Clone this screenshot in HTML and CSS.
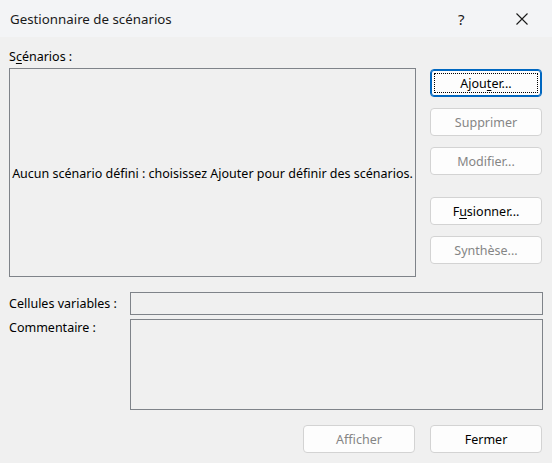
FILE: index.html
```html
<!DOCTYPE html>
<html lang="fr">
<head>
<meta charset="utf-8">
<link rel="stylesheet" href="styles.css">
</head>
<body>
<div class="dialog">
  <div class="titlebar">
    <span class="title">Gestionnaire de scénarios</span>
    <span class="help">?</span>
    <span class="close"><svg width="12" height="12" viewBox="0 0 12 12"><path d="M0.5 0.5 L11.5 11.5 M11.5 0.5 L0.5 11.5" stroke="#1a1a1a" stroke-width="1.1" fill="none"/></svg></span>
  </div>
  <div class="content">
    <div class="main">
      <div class="left">
        <div class="label">S<u>c</u>énarios :</div>
        <div class="listbox">Aucun scénario défini : choisissez Ajouter pour définir des scénarios.</div>
      </div>
      <div class="buttons">
        <button class="btn default"><span class="focus">Ajou<u>t</u>er...</span></button>
        <button class="btn disabled">Supprimer</button>
        <button class="btn disabled">Modifier...</button>
        <button class="btn spaced">F<u>u</u>sionner...</button>
        <button class="btn disabled">Synthèse...</button>
      </div>
    </div>
    <div class="fields">
      <div class="field-label">Cellules variables :</div>
      <div class="input"></div>
      <div class="field-label comment">Commentaire :</div>
      <div class="textarea"></div>
    </div>
    <div class="footer">
      <button class="btn disabled">Afficher</button>
      <button class="btn">Fermer</button>
    </div>
  </div>
</div>
</body>
</html>
```

FILE: styles.css
```css
html, body {
  margin: 0;
  padding: 0;
}
body {
  width: 552px;
  height: 463px;
  background: #f0f0f0;
  font-family: "Noto Sans", "Open Sans", sans-serif;
  font-size: 12.5px;
  color: #000;
  overflow: hidden;
}
.dialog {
  display: flex;
  flex-direction: column;
  height: 463px;
}
.titlebar {
  height: 37px;
  background: #f3f4f6;
  display: flex;
  align-items: center;
  padding-left: 10px;
}
.title {
  font-size: 13.3px;
  flex: 1;
  color: #1a1a1a;
}
.help {
  font-size: 15px;
  width: 12px;
  margin-right: 46px;
  color: #1a1a1a;
}
.close {
  display: flex;
  margin-right: 24px;
  margin-top: 1px;
}
.content {
  padding: 10px 10px 0 9px;
  display: flex;
  flex-direction: column;
}
.main {
  display: flex;
  gap: 14px;
}
.left {
  display: flex;
  flex-direction: column;
}
.label {
  height: 16px;
  line-height: 16px;
  margin-bottom: 3px;
  margin-top: 2px;
}
u {
  text-decoration-thickness: 1px;
  text-underline-offset: 2px;
}
.listbox {
  width: 405px;
  height: 206px;
  border: 1px solid #7f8389;
  display: flex;
  align-items: center;
  justify-content: center;
  white-space: nowrap;
  padding-top: 1px;
  box-sizing: content-box;
}
.buttons {
  display: flex;
  flex-direction: column;
  padding-top: 22px;
  gap: 11px;
}
.btn {
  width: 112px;
  height: 28px;
  box-sizing: border-box;
  background: #fdfdfd;
  border: 1px solid #d3d3d3;
  border-radius: 4px;
  font-family: inherit;
  font-size: 12.5px;
  color: #000;
  padding: 0;
  display: flex;
  align-items: center;
  justify-content: center;
}
.btn.disabled {
  color: #858585;
}
.btn.default {
  border: 1px solid #0067c0;
  box-shadow: inset 0 0 0 1px #0067c0;
  padding: 3px;
}
.focus {
  flex: 1;
  align-self: stretch;
  border: 1px dotted #000;
  display: flex;
  align-items: center;
  justify-content: center;
}
.btn.spaced {
  margin-top: 11px;
}
.fields {
  display: grid;
  grid-template-columns: 121px 413px;
  grid-template-rows: 23px 91px;
  row-gap: 4px;
  margin-top: 15px;
}
.field-label {
  line-height: 23px;
}
.field-label.comment {
  line-height: 16px;
  padding-top: 1px;
}
.input, .textarea {
  border: 1px solid #7f8389;
  box-sizing: border-box;
}
.footer {
  display: flex;
  justify-content: flex-end;
  gap: 15px;
  margin-top: 15px;
}
```
